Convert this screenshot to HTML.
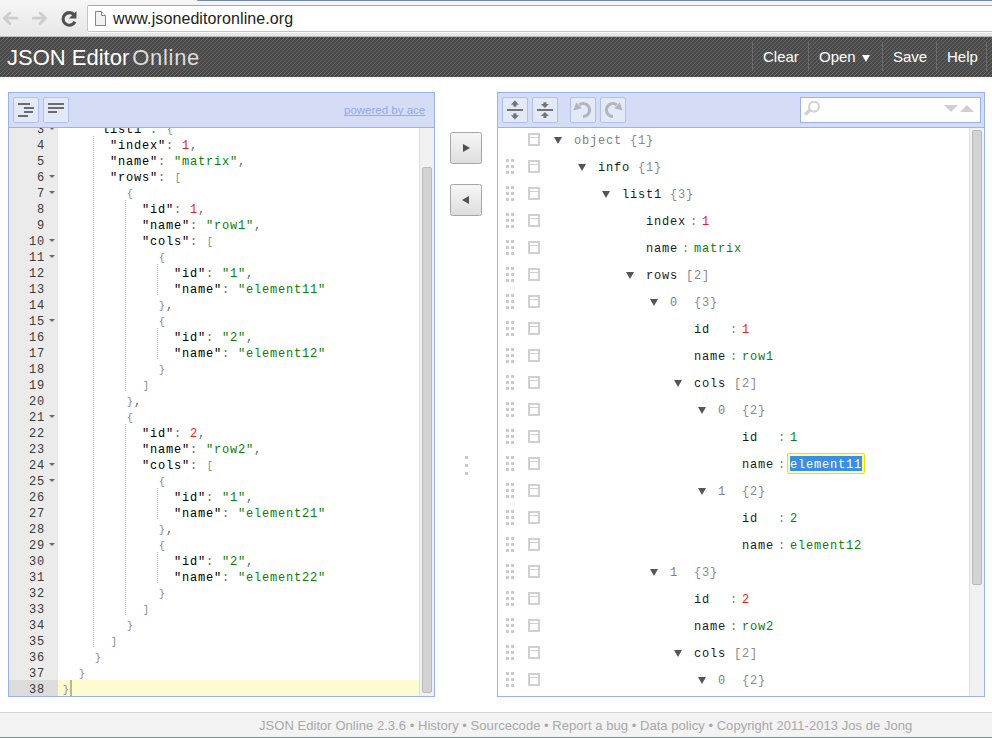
<!DOCTYPE html><html><head><meta charset="utf-8"><style>
*{margin:0;padding:0;box-sizing:border-box}
html,body{width:992px;height:738px;overflow:hidden;background:#fff;position:relative;font-family:"Liberation Sans",sans-serif}
.abs{position:absolute}
.chrome{left:0;top:0;width:992px;height:37px;background:linear-gradient(#f6f6f6,#e6e6e6)}
.hdr{left:0;top:37px;width:992px;height:40px;background:#494949;overflow:hidden}
.frame{border:1px solid #97b0f8;background:#fff}
.menu{background:#d5ddf6;border-bottom:1px solid #97b0f8}
.tbtn{position:absolute;width:26px;height:26px;border:1px solid #aec0f8;border-radius:2px;background:#e3e9f6}
.code{font-family:"Liberation Mono",monospace;font-size:12px;letter-spacing:0.8px;line-height:16px;white-space:pre}
.k{color:#000}.p{color:#666}.n{color:#ee1a1a}.s{color:#0a7d0a}.b{color:#8a8a8a;font-size:10.5px;letter-spacing:1.7px;position:relative;left:0.8px;top:-0.5px}
.tree{font-family:"Liberation Mono",monospace;font-size:12px;letter-spacing:0.8px;line-height:16px;white-space:pre}
.ig{position:absolute;width:1px;background-image:linear-gradient(#c6c6c6 50%,transparent 50%);background-size:1px 2px}
</style></head><body>

<div class="abs chrome"></div>
<div class="abs" style="left:197px;top:0;width:795px;height:1px;background:#7088aa;border-radius:1px 0 0 0"></div>
<div class="abs" style="left:87px;top:5px;width:920px;height:27px;background:#fff;border:1px solid #c4c4c4;border-top-color:#a8a8a8;border-radius:2px;box-shadow:0 1px 0 #fafafa"></div>
<div class="abs" style="left:0;top:36px;width:992px;height:1px;background:#bdbdbd"></div>
<svg class="abs" style="left:0;top:0" width="87" height="36">
<g fill="none" stroke="#cdcdcd" stroke-width="2.8" stroke-linecap="round" stroke-linejoin="round">
<path d="M4.5 18.2 H17 M9.8 13 L4.3 18.2 L9.8 23.6"/>
<path d="M33.3 18.2 H45.5 M40 13 L45.5 18.2 L40 23.6"/>
</g>
<path d="M74.3 15 A6.3 6.3 0 1 0 75 21.8" fill="none" stroke="#505050" stroke-width="3.1"/>
<path d="M76.5 11 L76.5 18.6 L68.8 18.6 Z" fill="#505050"/>
</svg>
<svg class="abs" style="left:93px;top:10px" width="16" height="18">
<path d="M2.5 1.5 H8.5 L12.5 5.5 V15.5 H2.5 Z" fill="#f2f2f2" stroke="#878787" stroke-width="1"/>
<path d="M8.5 1.5 V5.5 H12.5" fill="#fff" stroke="#878787" stroke-width="1"/>
</svg>
<div class="abs" style="left:113px;top:9px;font-size:16px;line-height:20px;color:#222;letter-spacing:0.1px">www.jsoneditoronline.org</div>
<div class="abs hdr"><svg width="992" height="40" style="position:absolute;left:0;top:0">
<defs><pattern id="st" x="1" width="4" height="4" patternUnits="userSpaceOnUse">
<rect width="4" height="4" fill="#4a4a4a"/>
<rect x="3" y="0" width="1" height="1" fill="#676767"/><rect x="2" y="1" width="1" height="1" fill="#676767"/>
<rect x="1" y="2" width="1" height="1" fill="#676767"/><rect x="0" y="3" width="1" height="1" fill="#676767"/>
</pattern></defs><rect width="992" height="40" fill="url(#st)"/></svg></div>
<div class="abs" style="left:7px;top:43px;font-size:22px;line-height:30px;color:#fff;white-space:pre">JSON Editor<span style="color:#dedede;margin-left:3px;letter-spacing:0.7px">Online</span></div>
<div class="abs" style="left:752px;top:42px;width:1px;height:29px;background:#6a6a6a"></div>
<div class="abs" style="left:808px;top:42px;width:1px;height:29px;background:#6a6a6a"></div>
<div class="abs" style="left:882px;top:42px;width:1px;height:29px;background:#6a6a6a"></div>
<div class="abs" style="left:936px;top:42px;width:1px;height:29px;background:#6a6a6a"></div>
<div class="abs" style="left:986px;top:42px;width:1px;height:29px;background:#6a6a6a"></div>
<div class="abs" style="left:763px;top:48px;font-size:15px;line-height:18px;color:#fff">Clear</div>
<div class="abs" style="left:819px;top:48px;font-size:15px;line-height:18px;color:#fff">Open</div>
<div class="abs" style="left:893px;top:48px;font-size:15px;line-height:18px;color:#fff">Save</div>
<div class="abs" style="left:947px;top:48px;font-size:15px;line-height:18px;color:#fff">Help</div>
<div class="abs" style="left:862px;top:55px;width:0;height:0;border-left:4.5px solid transparent;border-right:4.5px solid transparent;border-top:7px solid #fff"></div>
<div class="abs frame" style="left:8px;top:92px;width:427px;height:605px"></div>
<div class="abs menu" style="left:9px;top:93px;width:425px;height:35px"></div>
<div class="tbtn" style="left:13px;top:97px"></div><div class="tbtn" style="left:43px;top:97px"></div>
<svg class="abs" style="left:13px;top:96px" width="60" height="26"><g fill="#6c6c6c">
<rect x="5" y="7" width="12" height="2"/><rect x="11" y="11" width="10" height="2"/><rect x="11" y="15" width="9" height="2"/><rect x="5" y="19" width="10" height="2"/>
<rect x="35" y="7" width="16" height="2"/><rect x="35" y="11" width="16" height="2"/><rect x="35" y="15" width="9" height="2"/>
</g></svg>
<div class="abs" style="left:344px;top:103px;font-size:11.5px;line-height:14px;color:#8fa9f4;text-decoration:underline;text-decoration-skip-ink:none">powered by ace</div>
<div class="abs" style="left:9px;top:128px;width:425px;height:568px;overflow:hidden">
<div class="abs" style="left:0;top:0;width:49px;height:568px;background:#ebebeb"></div>
<div class="abs" style="left:0;top:552px;width:49px;height:16px;background:#dcdcdc"></div>
<div class="abs" style="left:49px;top:552px;width:361px;height:16px;background:#fffbd1"></div>
<div class="ig" style="left:84px;top:8px;height:512px"></div>
<div class="ig" style="left:116px;top:72px;height:192px"></div>
<div class="ig" style="left:116px;top:296px;height:192px"></div>
<div class="ig" style="left:148px;top:136px;height:32px"></div>
<div class="ig" style="left:148px;top:200px;height:32px"></div>
<div class="ig" style="left:148px;top:360px;height:32px"></div>
<div class="ig" style="left:148px;top:424px;height:32px"></div>
<div class="abs code" style="left:0;top:-38px;width:36px;text-align:right;color:#3a3a3a">1</div>
<div class="abs" style="left:40px;top:-33px;width:0;height:0;border-left:3px solid transparent;border-right:3px solid transparent;border-top:3px solid #6a6a6a"></div>
<div class="abs code" style="left:53px;top:-38px"><span class="b">{</span></div>
<div class="abs code" style="left:0;top:-22px;width:36px;text-align:right;color:#3a3a3a">2</div>
<div class="abs" style="left:40px;top:-17px;width:0;height:0;border-left:3px solid transparent;border-right:3px solid transparent;border-top:3px solid #6a6a6a"></div>
<div class="abs code" style="left:69px;top:-22px"><span class="k">"info"</span><span class="p">: </span><span class="b">{</span></div>
<div class="abs code" style="left:0;top:-6px;width:36px;text-align:right;color:#3a3a3a">3</div>
<div class="abs" style="left:40px;top:-1px;width:0;height:0;border-left:3px solid transparent;border-right:3px solid transparent;border-top:3px solid #6a6a6a"></div>
<div class="abs code" style="left:85px;top:-6px"><span class="k">"list1"</span><span class="p">: </span><span class="b">{</span></div>
<div class="abs code" style="left:0;top:10px;width:36px;text-align:right;color:#3a3a3a">4</div>
<div class="abs code" style="left:101px;top:10px"><span class="k">"index"</span><span class="p">: </span><span class="n">1</span><span class="p">,</span></div>
<div class="abs code" style="left:0;top:26px;width:36px;text-align:right;color:#3a3a3a">5</div>
<div class="abs code" style="left:101px;top:26px"><span class="k">"name"</span><span class="p">: </span><span class="s">"matrix"</span><span class="p">,</span></div>
<div class="abs code" style="left:0;top:42px;width:36px;text-align:right;color:#3a3a3a">6</div>
<div class="abs" style="left:40px;top:47px;width:0;height:0;border-left:3px solid transparent;border-right:3px solid transparent;border-top:3px solid #6a6a6a"></div>
<div class="abs code" style="left:101px;top:42px"><span class="k">"rows"</span><span class="p">: </span><span class="b">[</span></div>
<div class="abs code" style="left:0;top:58px;width:36px;text-align:right;color:#3a3a3a">7</div>
<div class="abs" style="left:40px;top:63px;width:0;height:0;border-left:3px solid transparent;border-right:3px solid transparent;border-top:3px solid #6a6a6a"></div>
<div class="abs code" style="left:117px;top:58px"><span class="b">{</span></div>
<div class="abs code" style="left:0;top:74px;width:36px;text-align:right;color:#3a3a3a">8</div>
<div class="abs code" style="left:133px;top:74px"><span class="k">"id"</span><span class="p">: </span><span class="n">1</span><span class="p">,</span></div>
<div class="abs code" style="left:0;top:90px;width:36px;text-align:right;color:#3a3a3a">9</div>
<div class="abs code" style="left:133px;top:90px"><span class="k">"name"</span><span class="p">: </span><span class="s">"row1"</span><span class="p">,</span></div>
<div class="abs code" style="left:0;top:106px;width:36px;text-align:right;color:#3a3a3a">10</div>
<div class="abs" style="left:40px;top:111px;width:0;height:0;border-left:3px solid transparent;border-right:3px solid transparent;border-top:3px solid #6a6a6a"></div>
<div class="abs code" style="left:133px;top:106px"><span class="k">"cols"</span><span class="p">: </span><span class="b">[</span></div>
<div class="abs code" style="left:0;top:122px;width:36px;text-align:right;color:#3a3a3a">11</div>
<div class="abs" style="left:40px;top:127px;width:0;height:0;border-left:3px solid transparent;border-right:3px solid transparent;border-top:3px solid #6a6a6a"></div>
<div class="abs code" style="left:149px;top:122px"><span class="b">{</span></div>
<div class="abs code" style="left:0;top:138px;width:36px;text-align:right;color:#3a3a3a">12</div>
<div class="abs code" style="left:165px;top:138px"><span class="k">"id"</span><span class="p">: </span><span class="s">"1"</span><span class="p">,</span></div>
<div class="abs code" style="left:0;top:154px;width:36px;text-align:right;color:#3a3a3a">13</div>
<div class="abs code" style="left:165px;top:154px"><span class="k">"name"</span><span class="p">: </span><span class="s">"element11"</span></div>
<div class="abs code" style="left:0;top:170px;width:36px;text-align:right;color:#3a3a3a">14</div>
<div class="abs code" style="left:149px;top:170px"><span class="b">}</span><span class="p">,</span></div>
<div class="abs code" style="left:0;top:186px;width:36px;text-align:right;color:#3a3a3a">15</div>
<div class="abs" style="left:40px;top:191px;width:0;height:0;border-left:3px solid transparent;border-right:3px solid transparent;border-top:3px solid #6a6a6a"></div>
<div class="abs code" style="left:149px;top:186px"><span class="b">{</span></div>
<div class="abs code" style="left:0;top:202px;width:36px;text-align:right;color:#3a3a3a">16</div>
<div class="abs code" style="left:165px;top:202px"><span class="k">"id"</span><span class="p">: </span><span class="s">"2"</span><span class="p">,</span></div>
<div class="abs code" style="left:0;top:218px;width:36px;text-align:right;color:#3a3a3a">17</div>
<div class="abs code" style="left:165px;top:218px"><span class="k">"name"</span><span class="p">: </span><span class="s">"element12"</span></div>
<div class="abs code" style="left:0;top:234px;width:36px;text-align:right;color:#3a3a3a">18</div>
<div class="abs code" style="left:149px;top:234px"><span class="b">}</span></div>
<div class="abs code" style="left:0;top:250px;width:36px;text-align:right;color:#3a3a3a">19</div>
<div class="abs code" style="left:133px;top:250px"><span class="b">]</span></div>
<div class="abs code" style="left:0;top:266px;width:36px;text-align:right;color:#3a3a3a">20</div>
<div class="abs code" style="left:117px;top:266px"><span class="b">}</span><span class="p">,</span></div>
<div class="abs code" style="left:0;top:282px;width:36px;text-align:right;color:#3a3a3a">21</div>
<div class="abs" style="left:40px;top:287px;width:0;height:0;border-left:3px solid transparent;border-right:3px solid transparent;border-top:3px solid #6a6a6a"></div>
<div class="abs code" style="left:117px;top:282px"><span class="b">{</span></div>
<div class="abs code" style="left:0;top:298px;width:36px;text-align:right;color:#3a3a3a">22</div>
<div class="abs code" style="left:133px;top:298px"><span class="k">"id"</span><span class="p">: </span><span class="n">2</span><span class="p">,</span></div>
<div class="abs code" style="left:0;top:314px;width:36px;text-align:right;color:#3a3a3a">23</div>
<div class="abs code" style="left:133px;top:314px"><span class="k">"name"</span><span class="p">: </span><span class="s">"row2"</span><span class="p">,</span></div>
<div class="abs code" style="left:0;top:330px;width:36px;text-align:right;color:#3a3a3a">24</div>
<div class="abs" style="left:40px;top:335px;width:0;height:0;border-left:3px solid transparent;border-right:3px solid transparent;border-top:3px solid #6a6a6a"></div>
<div class="abs code" style="left:133px;top:330px"><span class="k">"cols"</span><span class="p">: </span><span class="b">[</span></div>
<div class="abs code" style="left:0;top:346px;width:36px;text-align:right;color:#3a3a3a">25</div>
<div class="abs" style="left:40px;top:351px;width:0;height:0;border-left:3px solid transparent;border-right:3px solid transparent;border-top:3px solid #6a6a6a"></div>
<div class="abs code" style="left:149px;top:346px"><span class="b">{</span></div>
<div class="abs code" style="left:0;top:362px;width:36px;text-align:right;color:#3a3a3a">26</div>
<div class="abs code" style="left:165px;top:362px"><span class="k">"id"</span><span class="p">: </span><span class="s">"1"</span><span class="p">,</span></div>
<div class="abs code" style="left:0;top:378px;width:36px;text-align:right;color:#3a3a3a">27</div>
<div class="abs code" style="left:165px;top:378px"><span class="k">"name"</span><span class="p">: </span><span class="s">"element21"</span></div>
<div class="abs code" style="left:0;top:394px;width:36px;text-align:right;color:#3a3a3a">28</div>
<div class="abs code" style="left:149px;top:394px"><span class="b">}</span><span class="p">,</span></div>
<div class="abs code" style="left:0;top:410px;width:36px;text-align:right;color:#3a3a3a">29</div>
<div class="abs" style="left:40px;top:415px;width:0;height:0;border-left:3px solid transparent;border-right:3px solid transparent;border-top:3px solid #6a6a6a"></div>
<div class="abs code" style="left:149px;top:410px"><span class="b">{</span></div>
<div class="abs code" style="left:0;top:426px;width:36px;text-align:right;color:#3a3a3a">30</div>
<div class="abs code" style="left:165px;top:426px"><span class="k">"id"</span><span class="p">: </span><span class="s">"2"</span><span class="p">,</span></div>
<div class="abs code" style="left:0;top:442px;width:36px;text-align:right;color:#3a3a3a">31</div>
<div class="abs code" style="left:165px;top:442px"><span class="k">"name"</span><span class="p">: </span><span class="s">"element22"</span></div>
<div class="abs code" style="left:0;top:458px;width:36px;text-align:right;color:#3a3a3a">32</div>
<div class="abs code" style="left:149px;top:458px"><span class="b">}</span></div>
<div class="abs code" style="left:0;top:474px;width:36px;text-align:right;color:#3a3a3a">33</div>
<div class="abs code" style="left:133px;top:474px"><span class="b">]</span></div>
<div class="abs code" style="left:0;top:490px;width:36px;text-align:right;color:#3a3a3a">34</div>
<div class="abs code" style="left:117px;top:490px"><span class="b">}</span></div>
<div class="abs code" style="left:0;top:506px;width:36px;text-align:right;color:#3a3a3a">35</div>
<div class="abs code" style="left:101px;top:506px"><span class="b">]</span></div>
<div class="abs code" style="left:0;top:522px;width:36px;text-align:right;color:#3a3a3a">36</div>
<div class="abs code" style="left:85px;top:522px"><span class="b">}</span></div>
<div class="abs code" style="left:0;top:538px;width:36px;text-align:right;color:#3a3a3a">37</div>
<div class="abs code" style="left:69px;top:538px"><span class="b">}</span></div>
<div class="abs code" style="left:0;top:554px;width:36px;text-align:right;color:#3a3a3a">38</div>
<div class="abs code" style="left:53px;top:554px"><span class="b">}</span></div>
<div class="abs" style="left:61px;top:552px;width:2px;height:16px;background:#bdb58f"></div>
<div class="abs" style="left:410px;top:0;width:15px;height:568px;background:#f1f1f1;border-left:1px solid #dedede"></div>
<div class="abs" style="left:413px;top:39px;width:10px;height:526px;background:#d3d3d3;border:1px solid #b9b9b9;border-radius:2px"></div>
</div>
<div class="abs" style="left:450px;top:132px;width:32px;height:32px;border:1px solid #a6a6a6;border-radius:2.5px;background:linear-gradient(#f6f6f6,#dedede)"></div>
<div class="abs" style="left:463px;top:144px;width:0;height:0;border-top:4px solid transparent;border-bottom:4px solid transparent;border-left:7px solid #505050"></div>
<div class="abs" style="left:450px;top:184px;width:32px;height:32px;border:1px solid #a6a6a6;border-radius:2.5px;background:linear-gradient(#f6f6f6,#dedede)"></div>
<div class="abs" style="left:462px;top:196px;width:0;height:0;border-top:4px solid transparent;border-bottom:4px solid transparent;border-right:7px solid #505050"></div>
<div class="abs" style="left:465px;top:456px;width:3px;height:3px;background:#c8c8c8"></div>
<div class="abs" style="left:465px;top:464px;width:3px;height:3px;background:#c8c8c8"></div>
<div class="abs" style="left:465px;top:472px;width:3px;height:3px;background:#c8c8c8"></div>
<div class="abs frame" style="left:497px;top:92px;width:488px;height:605px"></div>
<div class="abs menu" style="left:498px;top:93px;width:486px;height:35px"></div>
<div class="tbtn" style="left:502px;top:97px"></div>
<div class="tbtn" style="left:532px;top:97px"></div>
<div class="tbtn" style="left:570px;top:97px"></div>
<div class="tbtn" style="left:600px;top:97px"></div>
<svg class="abs" style="left:502px;top:97px" width="130" height="26">
<g fill="#737373">
<rect x="5" y="12" width="16" height="2"/>
<path d="M12.9 3.3 L16.9 7.8 H14.4 V9.8 H11.4 V7.8 H8.9 Z"/>
<path d="M12.9 22.6 L16.9 18.2 H14.4 V16.2 H11.4 V18.2 H8.9 Z"/>
<rect x="35" y="12" width="16" height="2"/>
<path d="M42.9 11 L46.9 7 H44.4 V5.2 H41.4 V7 H38.9 Z"/>
<path d="M42.9 15 L46.9 19 H44.4 V20.9 H41.4 V19 H38.9 Z"/>
</g>
<g fill="none" stroke="#b2b5bd" stroke-width="3">
<path d="M77.3 7.7 A6.5 6.5 0 1 1 81 19.5"/>
<path d="M114.7 7.7 A6.5 6.5 0 1 0 111 19.5"/>
</g>
<g fill="#b2b5bd">
<path d="M71.3 13.6 L74.3 5.4 L79.8 11.2 Z"/>
<path d="M120.7 13.6 L117.7 5.4 L112.2 11.2 Z"/>
</g>
</svg>
<div class="abs" style="left:800px;top:97px;width:181px;height:26px;background:#fff;border:1px solid #97b0f8"></div>
<svg class="abs" style="left:800px;top:97px" width="181" height="26">
<circle cx="14" cy="9.7" r="4.9" fill="none" stroke="#d2d2d2" stroke-width="2.1"/>
<path d="M10 12.8 L5.2 17.8" stroke="#d2d2d2" stroke-width="3.6"/>
<path d="M144 8 H158 L151 15 Z" fill="#cfcfcf"/>
<path d="M160 15 H174 L167 8 Z" fill="#cfcfcf"/>
</svg>
<div class="abs" style="left:498px;top:128px;width:486px;height:568px;overflow:hidden">
<div class="abs" style="left:30px;top:5px;width:12px;height:13px;border:2px solid #d0d0d0"></div>
<div class="abs" style="left:32px;top:9px;width:8px;height:1px;background:#d0d0d0"></div>
<div class="abs" style="left:56px;top:9px;width:0;height:0;border-left:4px solid transparent;border-right:4px solid transparent;border-top:7px solid #565656"></div>
<div class="abs tree" style="left:76px;top:5px;color:#808080">object</div>
<div class="abs tree" style="left:132px;top:5px;color:#8a8a8a">{1}</div>
<div class="abs" style="left:8px;top:31px;width:3px;height:3px;background:#cbcbcb"></div>
<div class="abs" style="left:8px;top:37px;width:3px;height:3px;background:#cbcbcb"></div>
<div class="abs" style="left:8px;top:43px;width:3px;height:3px;background:#cbcbcb"></div>
<div class="abs" style="left:13px;top:31px;width:3px;height:3px;background:#cbcbcb"></div>
<div class="abs" style="left:13px;top:37px;width:3px;height:3px;background:#cbcbcb"></div>
<div class="abs" style="left:13px;top:43px;width:3px;height:3px;background:#cbcbcb"></div>
<div class="abs" style="left:30px;top:32px;width:12px;height:13px;border:2px solid #d0d0d0"></div>
<div class="abs" style="left:32px;top:36px;width:8px;height:1px;background:#d0d0d0"></div>
<div class="abs" style="left:80px;top:36px;width:0;height:0;border-left:4px solid transparent;border-right:4px solid transparent;border-top:7px solid #565656"></div>
<div class="abs tree" style="left:100px;top:32px;color:#1a1a1a">info</div>
<div class="abs tree" style="left:140px;top:32px;color:#8a8a8a">{1}</div>
<div class="abs" style="left:8px;top:58px;width:3px;height:3px;background:#cbcbcb"></div>
<div class="abs" style="left:8px;top:64px;width:3px;height:3px;background:#cbcbcb"></div>
<div class="abs" style="left:8px;top:70px;width:3px;height:3px;background:#cbcbcb"></div>
<div class="abs" style="left:13px;top:58px;width:3px;height:3px;background:#cbcbcb"></div>
<div class="abs" style="left:13px;top:64px;width:3px;height:3px;background:#cbcbcb"></div>
<div class="abs" style="left:13px;top:70px;width:3px;height:3px;background:#cbcbcb"></div>
<div class="abs" style="left:30px;top:59px;width:12px;height:13px;border:2px solid #d0d0d0"></div>
<div class="abs" style="left:32px;top:63px;width:8px;height:1px;background:#d0d0d0"></div>
<div class="abs" style="left:104px;top:63px;width:0;height:0;border-left:4px solid transparent;border-right:4px solid transparent;border-top:7px solid #565656"></div>
<div class="abs tree" style="left:124px;top:59px;color:#1a1a1a">list1</div>
<div class="abs tree" style="left:172px;top:59px;color:#8a8a8a">{3}</div>
<div class="abs" style="left:8px;top:85px;width:3px;height:3px;background:#cbcbcb"></div>
<div class="abs" style="left:8px;top:91px;width:3px;height:3px;background:#cbcbcb"></div>
<div class="abs" style="left:8px;top:97px;width:3px;height:3px;background:#cbcbcb"></div>
<div class="abs" style="left:13px;top:85px;width:3px;height:3px;background:#cbcbcb"></div>
<div class="abs" style="left:13px;top:91px;width:3px;height:3px;background:#cbcbcb"></div>
<div class="abs" style="left:13px;top:97px;width:3px;height:3px;background:#cbcbcb"></div>
<div class="abs" style="left:30px;top:86px;width:12px;height:13px;border:2px solid #d0d0d0"></div>
<div class="abs" style="left:32px;top:90px;width:8px;height:1px;background:#d0d0d0"></div>
<div class="abs tree" style="left:148px;top:86px;color:#1a1a1a">index</div>
<div class="abs tree" style="left:192px;top:86px;color:#808080">:</div>
<div class="abs tree" style="left:204px;top:86px;color:#ee1a1a">1</div>
<div class="abs" style="left:8px;top:112px;width:3px;height:3px;background:#cbcbcb"></div>
<div class="abs" style="left:8px;top:118px;width:3px;height:3px;background:#cbcbcb"></div>
<div class="abs" style="left:8px;top:124px;width:3px;height:3px;background:#cbcbcb"></div>
<div class="abs" style="left:13px;top:112px;width:3px;height:3px;background:#cbcbcb"></div>
<div class="abs" style="left:13px;top:118px;width:3px;height:3px;background:#cbcbcb"></div>
<div class="abs" style="left:13px;top:124px;width:3px;height:3px;background:#cbcbcb"></div>
<div class="abs" style="left:30px;top:113px;width:12px;height:13px;border:2px solid #d0d0d0"></div>
<div class="abs" style="left:32px;top:117px;width:8px;height:1px;background:#d0d0d0"></div>
<div class="abs tree" style="left:148px;top:113px;color:#1a1a1a">name</div>
<div class="abs tree" style="left:184px;top:113px;color:#808080">:</div>
<div class="abs tree" style="left:196px;top:113px;color:#0a7d0a">matrix</div>
<div class="abs" style="left:8px;top:139px;width:3px;height:3px;background:#cbcbcb"></div>
<div class="abs" style="left:8px;top:145px;width:3px;height:3px;background:#cbcbcb"></div>
<div class="abs" style="left:8px;top:151px;width:3px;height:3px;background:#cbcbcb"></div>
<div class="abs" style="left:13px;top:139px;width:3px;height:3px;background:#cbcbcb"></div>
<div class="abs" style="left:13px;top:145px;width:3px;height:3px;background:#cbcbcb"></div>
<div class="abs" style="left:13px;top:151px;width:3px;height:3px;background:#cbcbcb"></div>
<div class="abs" style="left:30px;top:140px;width:12px;height:13px;border:2px solid #d0d0d0"></div>
<div class="abs" style="left:32px;top:144px;width:8px;height:1px;background:#d0d0d0"></div>
<div class="abs" style="left:128px;top:144px;width:0;height:0;border-left:4px solid transparent;border-right:4px solid transparent;border-top:7px solid #565656"></div>
<div class="abs tree" style="left:148px;top:140px;color:#1a1a1a">rows</div>
<div class="abs tree" style="left:188px;top:140px;color:#8a8a8a">[2]</div>
<div class="abs" style="left:8px;top:166px;width:3px;height:3px;background:#cbcbcb"></div>
<div class="abs" style="left:8px;top:172px;width:3px;height:3px;background:#cbcbcb"></div>
<div class="abs" style="left:8px;top:178px;width:3px;height:3px;background:#cbcbcb"></div>
<div class="abs" style="left:13px;top:166px;width:3px;height:3px;background:#cbcbcb"></div>
<div class="abs" style="left:13px;top:172px;width:3px;height:3px;background:#cbcbcb"></div>
<div class="abs" style="left:13px;top:178px;width:3px;height:3px;background:#cbcbcb"></div>
<div class="abs" style="left:30px;top:167px;width:12px;height:13px;border:2px solid #d0d0d0"></div>
<div class="abs" style="left:32px;top:171px;width:8px;height:1px;background:#d0d0d0"></div>
<div class="abs" style="left:152px;top:171px;width:0;height:0;border-left:4px solid transparent;border-right:4px solid transparent;border-top:7px solid #565656"></div>
<div class="abs tree" style="left:172px;top:167px;color:#808080">0</div>
<div class="abs tree" style="left:196px;top:167px;color:#8a8a8a">{3}</div>
<div class="abs" style="left:8px;top:193px;width:3px;height:3px;background:#cbcbcb"></div>
<div class="abs" style="left:8px;top:199px;width:3px;height:3px;background:#cbcbcb"></div>
<div class="abs" style="left:8px;top:205px;width:3px;height:3px;background:#cbcbcb"></div>
<div class="abs" style="left:13px;top:193px;width:3px;height:3px;background:#cbcbcb"></div>
<div class="abs" style="left:13px;top:199px;width:3px;height:3px;background:#cbcbcb"></div>
<div class="abs" style="left:13px;top:205px;width:3px;height:3px;background:#cbcbcb"></div>
<div class="abs" style="left:30px;top:194px;width:12px;height:13px;border:2px solid #d0d0d0"></div>
<div class="abs" style="left:32px;top:198px;width:8px;height:1px;background:#d0d0d0"></div>
<div class="abs tree" style="left:196px;top:194px;color:#1a1a1a">id</div>
<div class="abs tree" style="left:232px;top:194px;color:#808080">:</div>
<div class="abs tree" style="left:244px;top:194px;color:#ee1a1a">1</div>
<div class="abs" style="left:8px;top:220px;width:3px;height:3px;background:#cbcbcb"></div>
<div class="abs" style="left:8px;top:226px;width:3px;height:3px;background:#cbcbcb"></div>
<div class="abs" style="left:8px;top:232px;width:3px;height:3px;background:#cbcbcb"></div>
<div class="abs" style="left:13px;top:220px;width:3px;height:3px;background:#cbcbcb"></div>
<div class="abs" style="left:13px;top:226px;width:3px;height:3px;background:#cbcbcb"></div>
<div class="abs" style="left:13px;top:232px;width:3px;height:3px;background:#cbcbcb"></div>
<div class="abs" style="left:30px;top:221px;width:12px;height:13px;border:2px solid #d0d0d0"></div>
<div class="abs" style="left:32px;top:225px;width:8px;height:1px;background:#d0d0d0"></div>
<div class="abs tree" style="left:196px;top:221px;color:#1a1a1a">name</div>
<div class="abs tree" style="left:232px;top:221px;color:#808080">:</div>
<div class="abs tree" style="left:244px;top:221px;color:#0a7d0a">row1</div>
<div class="abs" style="left:8px;top:247px;width:3px;height:3px;background:#cbcbcb"></div>
<div class="abs" style="left:8px;top:253px;width:3px;height:3px;background:#cbcbcb"></div>
<div class="abs" style="left:8px;top:259px;width:3px;height:3px;background:#cbcbcb"></div>
<div class="abs" style="left:13px;top:247px;width:3px;height:3px;background:#cbcbcb"></div>
<div class="abs" style="left:13px;top:253px;width:3px;height:3px;background:#cbcbcb"></div>
<div class="abs" style="left:13px;top:259px;width:3px;height:3px;background:#cbcbcb"></div>
<div class="abs" style="left:30px;top:248px;width:12px;height:13px;border:2px solid #d0d0d0"></div>
<div class="abs" style="left:32px;top:252px;width:8px;height:1px;background:#d0d0d0"></div>
<div class="abs" style="left:176px;top:252px;width:0;height:0;border-left:4px solid transparent;border-right:4px solid transparent;border-top:7px solid #565656"></div>
<div class="abs tree" style="left:196px;top:248px;color:#1a1a1a">cols</div>
<div class="abs tree" style="left:236px;top:248px;color:#8a8a8a">[2]</div>
<div class="abs" style="left:8px;top:274px;width:3px;height:3px;background:#cbcbcb"></div>
<div class="abs" style="left:8px;top:280px;width:3px;height:3px;background:#cbcbcb"></div>
<div class="abs" style="left:8px;top:286px;width:3px;height:3px;background:#cbcbcb"></div>
<div class="abs" style="left:13px;top:274px;width:3px;height:3px;background:#cbcbcb"></div>
<div class="abs" style="left:13px;top:280px;width:3px;height:3px;background:#cbcbcb"></div>
<div class="abs" style="left:13px;top:286px;width:3px;height:3px;background:#cbcbcb"></div>
<div class="abs" style="left:30px;top:275px;width:12px;height:13px;border:2px solid #d0d0d0"></div>
<div class="abs" style="left:32px;top:279px;width:8px;height:1px;background:#d0d0d0"></div>
<div class="abs" style="left:200px;top:279px;width:0;height:0;border-left:4px solid transparent;border-right:4px solid transparent;border-top:7px solid #565656"></div>
<div class="abs tree" style="left:220px;top:275px;color:#808080">0</div>
<div class="abs tree" style="left:244px;top:275px;color:#8a8a8a">{2}</div>
<div class="abs" style="left:8px;top:301px;width:3px;height:3px;background:#cbcbcb"></div>
<div class="abs" style="left:8px;top:307px;width:3px;height:3px;background:#cbcbcb"></div>
<div class="abs" style="left:8px;top:313px;width:3px;height:3px;background:#cbcbcb"></div>
<div class="abs" style="left:13px;top:301px;width:3px;height:3px;background:#cbcbcb"></div>
<div class="abs" style="left:13px;top:307px;width:3px;height:3px;background:#cbcbcb"></div>
<div class="abs" style="left:13px;top:313px;width:3px;height:3px;background:#cbcbcb"></div>
<div class="abs" style="left:30px;top:302px;width:12px;height:13px;border:2px solid #d0d0d0"></div>
<div class="abs" style="left:32px;top:306px;width:8px;height:1px;background:#d0d0d0"></div>
<div class="abs tree" style="left:244px;top:302px;color:#1a1a1a">id</div>
<div class="abs tree" style="left:280px;top:302px;color:#808080">:</div>
<div class="abs tree" style="left:292px;top:302px;color:#0a7d0a">1</div>
<div class="abs" style="left:8px;top:328px;width:3px;height:3px;background:#cbcbcb"></div>
<div class="abs" style="left:8px;top:334px;width:3px;height:3px;background:#cbcbcb"></div>
<div class="abs" style="left:8px;top:340px;width:3px;height:3px;background:#cbcbcb"></div>
<div class="abs" style="left:13px;top:328px;width:3px;height:3px;background:#cbcbcb"></div>
<div class="abs" style="left:13px;top:334px;width:3px;height:3px;background:#cbcbcb"></div>
<div class="abs" style="left:13px;top:340px;width:3px;height:3px;background:#cbcbcb"></div>
<div class="abs" style="left:30px;top:329px;width:12px;height:13px;border:2px solid #d0d0d0"></div>
<div class="abs" style="left:32px;top:333px;width:8px;height:1px;background:#d0d0d0"></div>
<div class="abs tree" style="left:244px;top:329px;color:#1a1a1a">name</div>
<div class="abs tree" style="left:280px;top:329px;color:#808080">:</div>
<div class="abs" style="left:289px;top:325px;width:78px;height:21px;background:#ffffab;border:1px solid #f0e000;border-radius:2px"></div>
<div class="abs" style="left:292px;top:328px;width:72px;height:15px;background:#3b8ee6"></div>
<div class="abs tree" style="left:292px;top:329px;color:#fff">element11</div>
<div class="abs" style="left:8px;top:355px;width:3px;height:3px;background:#cbcbcb"></div>
<div class="abs" style="left:8px;top:361px;width:3px;height:3px;background:#cbcbcb"></div>
<div class="abs" style="left:8px;top:367px;width:3px;height:3px;background:#cbcbcb"></div>
<div class="abs" style="left:13px;top:355px;width:3px;height:3px;background:#cbcbcb"></div>
<div class="abs" style="left:13px;top:361px;width:3px;height:3px;background:#cbcbcb"></div>
<div class="abs" style="left:13px;top:367px;width:3px;height:3px;background:#cbcbcb"></div>
<div class="abs" style="left:30px;top:356px;width:12px;height:13px;border:2px solid #d0d0d0"></div>
<div class="abs" style="left:32px;top:360px;width:8px;height:1px;background:#d0d0d0"></div>
<div class="abs" style="left:200px;top:360px;width:0;height:0;border-left:4px solid transparent;border-right:4px solid transparent;border-top:7px solid #565656"></div>
<div class="abs tree" style="left:220px;top:356px;color:#808080">1</div>
<div class="abs tree" style="left:244px;top:356px;color:#8a8a8a">{2}</div>
<div class="abs" style="left:8px;top:382px;width:3px;height:3px;background:#cbcbcb"></div>
<div class="abs" style="left:8px;top:388px;width:3px;height:3px;background:#cbcbcb"></div>
<div class="abs" style="left:8px;top:394px;width:3px;height:3px;background:#cbcbcb"></div>
<div class="abs" style="left:13px;top:382px;width:3px;height:3px;background:#cbcbcb"></div>
<div class="abs" style="left:13px;top:388px;width:3px;height:3px;background:#cbcbcb"></div>
<div class="abs" style="left:13px;top:394px;width:3px;height:3px;background:#cbcbcb"></div>
<div class="abs" style="left:30px;top:383px;width:12px;height:13px;border:2px solid #d0d0d0"></div>
<div class="abs" style="left:32px;top:387px;width:8px;height:1px;background:#d0d0d0"></div>
<div class="abs tree" style="left:244px;top:383px;color:#1a1a1a">id</div>
<div class="abs tree" style="left:280px;top:383px;color:#808080">:</div>
<div class="abs tree" style="left:292px;top:383px;color:#0a7d0a">2</div>
<div class="abs" style="left:8px;top:409px;width:3px;height:3px;background:#cbcbcb"></div>
<div class="abs" style="left:8px;top:415px;width:3px;height:3px;background:#cbcbcb"></div>
<div class="abs" style="left:8px;top:421px;width:3px;height:3px;background:#cbcbcb"></div>
<div class="abs" style="left:13px;top:409px;width:3px;height:3px;background:#cbcbcb"></div>
<div class="abs" style="left:13px;top:415px;width:3px;height:3px;background:#cbcbcb"></div>
<div class="abs" style="left:13px;top:421px;width:3px;height:3px;background:#cbcbcb"></div>
<div class="abs" style="left:30px;top:410px;width:12px;height:13px;border:2px solid #d0d0d0"></div>
<div class="abs" style="left:32px;top:414px;width:8px;height:1px;background:#d0d0d0"></div>
<div class="abs tree" style="left:244px;top:410px;color:#1a1a1a">name</div>
<div class="abs tree" style="left:280px;top:410px;color:#808080">:</div>
<div class="abs tree" style="left:292px;top:410px;color:#0a7d0a">element12</div>
<div class="abs" style="left:8px;top:436px;width:3px;height:3px;background:#cbcbcb"></div>
<div class="abs" style="left:8px;top:442px;width:3px;height:3px;background:#cbcbcb"></div>
<div class="abs" style="left:8px;top:448px;width:3px;height:3px;background:#cbcbcb"></div>
<div class="abs" style="left:13px;top:436px;width:3px;height:3px;background:#cbcbcb"></div>
<div class="abs" style="left:13px;top:442px;width:3px;height:3px;background:#cbcbcb"></div>
<div class="abs" style="left:13px;top:448px;width:3px;height:3px;background:#cbcbcb"></div>
<div class="abs" style="left:30px;top:437px;width:12px;height:13px;border:2px solid #d0d0d0"></div>
<div class="abs" style="left:32px;top:441px;width:8px;height:1px;background:#d0d0d0"></div>
<div class="abs" style="left:152px;top:441px;width:0;height:0;border-left:4px solid transparent;border-right:4px solid transparent;border-top:7px solid #565656"></div>
<div class="abs tree" style="left:172px;top:437px;color:#808080">1</div>
<div class="abs tree" style="left:196px;top:437px;color:#8a8a8a">{3}</div>
<div class="abs" style="left:8px;top:463px;width:3px;height:3px;background:#cbcbcb"></div>
<div class="abs" style="left:8px;top:469px;width:3px;height:3px;background:#cbcbcb"></div>
<div class="abs" style="left:8px;top:475px;width:3px;height:3px;background:#cbcbcb"></div>
<div class="abs" style="left:13px;top:463px;width:3px;height:3px;background:#cbcbcb"></div>
<div class="abs" style="left:13px;top:469px;width:3px;height:3px;background:#cbcbcb"></div>
<div class="abs" style="left:13px;top:475px;width:3px;height:3px;background:#cbcbcb"></div>
<div class="abs" style="left:30px;top:464px;width:12px;height:13px;border:2px solid #d0d0d0"></div>
<div class="abs" style="left:32px;top:468px;width:8px;height:1px;background:#d0d0d0"></div>
<div class="abs tree" style="left:196px;top:464px;color:#1a1a1a">id</div>
<div class="abs tree" style="left:232px;top:464px;color:#808080">:</div>
<div class="abs tree" style="left:244px;top:464px;color:#ee1a1a">2</div>
<div class="abs" style="left:8px;top:490px;width:3px;height:3px;background:#cbcbcb"></div>
<div class="abs" style="left:8px;top:496px;width:3px;height:3px;background:#cbcbcb"></div>
<div class="abs" style="left:8px;top:502px;width:3px;height:3px;background:#cbcbcb"></div>
<div class="abs" style="left:13px;top:490px;width:3px;height:3px;background:#cbcbcb"></div>
<div class="abs" style="left:13px;top:496px;width:3px;height:3px;background:#cbcbcb"></div>
<div class="abs" style="left:13px;top:502px;width:3px;height:3px;background:#cbcbcb"></div>
<div class="abs" style="left:30px;top:491px;width:12px;height:13px;border:2px solid #d0d0d0"></div>
<div class="abs" style="left:32px;top:495px;width:8px;height:1px;background:#d0d0d0"></div>
<div class="abs tree" style="left:196px;top:491px;color:#1a1a1a">name</div>
<div class="abs tree" style="left:232px;top:491px;color:#808080">:</div>
<div class="abs tree" style="left:244px;top:491px;color:#0a7d0a">row2</div>
<div class="abs" style="left:8px;top:517px;width:3px;height:3px;background:#cbcbcb"></div>
<div class="abs" style="left:8px;top:523px;width:3px;height:3px;background:#cbcbcb"></div>
<div class="abs" style="left:8px;top:529px;width:3px;height:3px;background:#cbcbcb"></div>
<div class="abs" style="left:13px;top:517px;width:3px;height:3px;background:#cbcbcb"></div>
<div class="abs" style="left:13px;top:523px;width:3px;height:3px;background:#cbcbcb"></div>
<div class="abs" style="left:13px;top:529px;width:3px;height:3px;background:#cbcbcb"></div>
<div class="abs" style="left:30px;top:518px;width:12px;height:13px;border:2px solid #d0d0d0"></div>
<div class="abs" style="left:32px;top:522px;width:8px;height:1px;background:#d0d0d0"></div>
<div class="abs" style="left:176px;top:522px;width:0;height:0;border-left:4px solid transparent;border-right:4px solid transparent;border-top:7px solid #565656"></div>
<div class="abs tree" style="left:196px;top:518px;color:#1a1a1a">cols</div>
<div class="abs tree" style="left:236px;top:518px;color:#8a8a8a">[2]</div>
<div class="abs" style="left:8px;top:544px;width:3px;height:3px;background:#cbcbcb"></div>
<div class="abs" style="left:8px;top:550px;width:3px;height:3px;background:#cbcbcb"></div>
<div class="abs" style="left:8px;top:556px;width:3px;height:3px;background:#cbcbcb"></div>
<div class="abs" style="left:13px;top:544px;width:3px;height:3px;background:#cbcbcb"></div>
<div class="abs" style="left:13px;top:550px;width:3px;height:3px;background:#cbcbcb"></div>
<div class="abs" style="left:13px;top:556px;width:3px;height:3px;background:#cbcbcb"></div>
<div class="abs" style="left:30px;top:545px;width:12px;height:13px;border:2px solid #d0d0d0"></div>
<div class="abs" style="left:32px;top:549px;width:8px;height:1px;background:#d0d0d0"></div>
<div class="abs" style="left:200px;top:549px;width:0;height:0;border-left:4px solid transparent;border-right:4px solid transparent;border-top:7px solid #565656"></div>
<div class="abs tree" style="left:220px;top:545px;color:#808080">0</div>
<div class="abs tree" style="left:244px;top:545px;color:#8a8a8a">{2}</div>
<div class="abs" style="left:471px;top:0;width:15px;height:568px;background:#f1f1f1;border-left:1px solid #dedede"></div>
<div class="abs" style="left:474px;top:2px;width:10px;height:455px;background:#d3d3d3;border:1px solid #b9b9b9;border-radius:2px"></div>
</div>
<div class="abs" style="left:0;top:712px;width:992px;height:26px;background:#f3f3f3;border-top:1px solid #d0d0d0"></div>
<div class="abs" style="left:0;top:737px;width:992px;height:1px;background:#7890ab"></div>
<div class="abs" style="left:259px;top:717px;font-size:13px;letter-spacing:0.045px;line-height:18px;color:#a8a8a8;white-space:pre">JSON Editor Online 2.3.6 • History • Sourcecode • Report a bug • Data policy • Copyright 2011-2013 Jos de Jong</div>
</body></html>
